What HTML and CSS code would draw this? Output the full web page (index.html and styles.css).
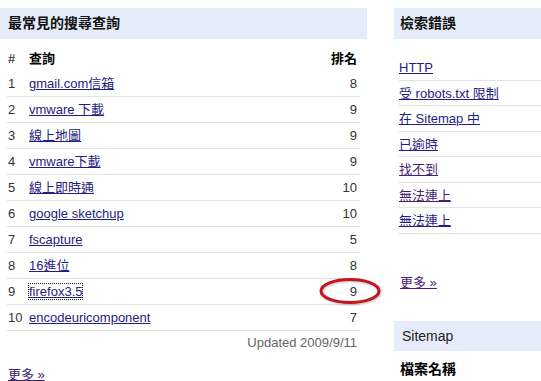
FILE: index.html
```html
<!DOCTYPE html>
<html lang="zh-Hant">
<head>
<meta charset="utf-8">
<link rel="stylesheet" href="styles.css">
</head>
<body>
<div class="page">
  <section class="left">
    <h2 class="bar">最常見的搜尋查詢</h2>
    <div class="tablewrap">
      <table class="queries">
        <thead>
          <tr><th class="num">#</th><th class="q">查詢</th><th class="rank">排名</th></tr>
        </thead>
        <tbody>
          <tr><td class="num">1</td><td class="q"><a href="#">gmail.com信箱</a></td><td class="rank">8</td></tr>
          <tr><td class="num">2</td><td class="q"><a href="#">vmware 下載</a></td><td class="rank">9</td></tr>
          <tr><td class="num">3</td><td class="q"><a href="#">線上地圖</a></td><td class="rank">9</td></tr>
          <tr><td class="num">4</td><td class="q"><a href="#">vmware下載</a></td><td class="rank">9</td></tr>
          <tr><td class="num">5</td><td class="q"><a href="#">線上即時通</a></td><td class="rank">10</td></tr>
          <tr><td class="num">6</td><td class="q"><a href="#">google sketchup</a></td><td class="rank">10</td></tr>
          <tr><td class="num">7</td><td class="q"><a href="#">fscapture</a></td><td class="rank">5</td></tr>
          <tr><td class="num">8</td><td class="q"><a href="#">16進位</a></td><td class="rank">8</td></tr>
          <tr><td class="num">9</td><td class="q"><a href="#" class="focused">firefox3.5</a></td><td class="rank">9</td></tr>
          <tr><td class="num">10</td><td class="q"><a href="#">encodeuricomponent</a></td><td class="rank">7</td></tr>
        </tbody>
      </table>
      <svg class="circle" width="66" height="30" viewBox="0 0 66 30">
        <ellipse cx="33" cy="15" rx="29" ry="11.5" fill="none" stroke="#c4161c" stroke-width="3"/>
      </svg>
    </div>
    <div class="updated">Updated 2009/9/11</div>
    <a href="#" class="more">更多 »</a>
  </section>
  <aside class="right">
    <h2 class="bar rbar">檢索錯誤</h2>
    <ul class="errors">
      <li><a href="#">HTTP</a></li>
      <li><a href="#">受 robots.txt 限制</a></li>
      <li><a href="#">在 Sitemap 中</a></li>
      <li><a href="#">已逾時</a></li>
      <li><a href="#" class="visited">找不到</a></li>
      <li><a href="#" class="visited">無法連上</a></li>
      <li><a href="#">無法連上</a></li>
    </ul>
    <a href="#" class="more rmore visited">更多 »</a>
    <h2 class="bar rbar sitemap">Sitemap</h2>
    <div class="subhead">檔案名稱</div>
  </aside>
</div>
</body>
</html>
```

FILE: styles.css
```css
html, body {
  margin: 0;
  padding: 0;
  background: #fff;
}
body {
  font-family: "Liberation Sans", Arial, "Noto Sans CJK TC", sans-serif;
  font-size: 13px;
  color: #333;
  overflow: hidden;
}
.page {
  display: flex;
  gap: 27px;
  padding-top: 8px;
}
.left {
  width: 367px;
  flex: none;
}
.right {
  flex: 1;
  min-width: 0;
}
.bar {
  margin: 0;
  height: 31px;
  line-height: 31px;
  background: #e5ecf9;
  font-size: 14px;
  font-weight: bold;
  color: #111;
  padding-left: 8px;
}
.rbar {
  padding-left: 6px;
}
.tablewrap {
  position: relative;
  margin: 8px 7px 0 7px;
}
.queries {
  width: 100%;
  border-collapse: collapse;
}
.queries th {
  height: 24px;
  padding: 0;
  font-size: 13px;
  font-weight: bold;
  color: #000;
  text-align: left;
  line-height: 24px;
}
.queries td {
  height: 25px;
  padding: 0;
  line-height: 25px;
  border-bottom: 1px solid #e2e2e2;
  color: #333;
}
.queries .num {
  width: 21px;
  padding-left: 1px;
}
.queries th.num {
  font-weight: normal;
}
.queries .rank {
  text-align: right;
  padding-right: 3px;
}
a {
  color: #261c82;
  text-decoration: underline;
}
a.visited {
  color: #4a1f73;
}
a.focused {
  outline: 1px dotted #222;
  outline-offset: 0;
}
.circle {
  position: absolute;
  left: 310px;
  top: 229px;
  filter: drop-shadow(1px 1px 1px rgba(0,0,0,0.25));
}
.updated {
  text-align: right;
  padding-right: 10px;
  height: 24px;
  line-height: 24px;
  color: #666;
}
.more {
  display: inline-block;
  margin: 12px 0 0 8px;
  line-height: 16px;
  color: #3a2470;
}
.errors {
  list-style: none;
  margin: 16px 0 0 5px;
  padding: 0;
}
.errors li {
  height: 24.5px;
  line-height: 25px;
  border-bottom: 1px solid #e2e2e2;
}
.rmore {
  margin: 41px 0 0 6px;
}
.sitemap {
  margin-top: 30px;
  height: 30px;
  line-height: 30px;
  font-weight: normal;
  font-size: 14px;
  color: #222;
  padding-left: 8px;
}
.subhead {
  margin: 9px 0 0 6px;
  font-size: 14px;
  font-weight: bold;
  color: #000;
  line-height: 18px;
}
```
